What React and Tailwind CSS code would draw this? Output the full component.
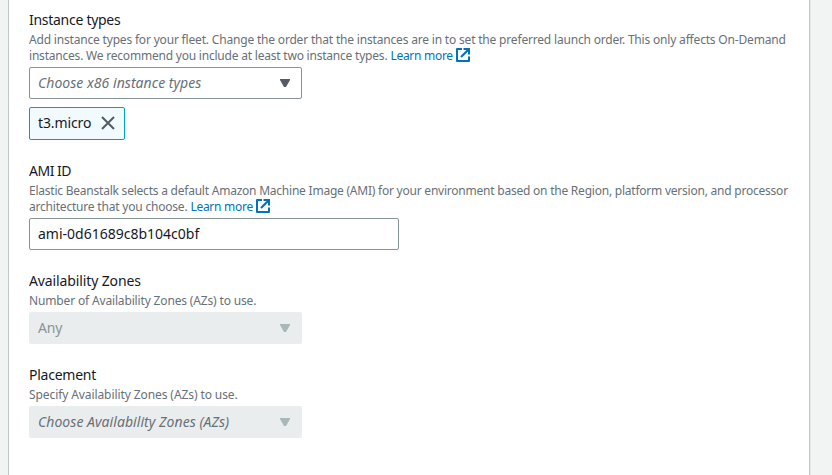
const ExternalIcon = () => (
  <svg className="mb-[2px] ml-[3px] h-[14px] w-[14px] shrink-0" viewBox="0 0 14 14" fill="none" stroke="#0073bb" strokeWidth="2">
    <path d="M6 1H1V13H13V8.5" strokeLinejoin="round" />
    <path d="M7.5 1H13V6.5M12.6 1.4L5 9" strokeWidth="2.1" />
  </svg>
);

const Caret = ({ className }) => (
  <svg className={`h-[8px] w-[10px] shrink-0 ${className}`} viewBox="0 0 10 8" fill="currentColor">
    <path d="M0 0H10V1L6 8H4L0 1Z" />
  </svg>
);

const Label = ({ children, className = "" }) => (
  <div className="h-[22px] text-[14px] leading-[22px] text-[#16191f]">
    <span className={className}>{children}</span>
  </div>
);

const Line = ({ children, className = "", link }) => (
  <div className="flex h-4 items-center whitespace-nowrap text-[12px] leading-4 text-[#687078]">
    <span className={className}>{children}</span>
    {link && (
      <a className="ml-[3px] flex h-4 items-center text-[#0073bb]">
        <span className="tracking-[-0.28px]">Learn more</span>
        <ExternalIcon />
      </a>
    )}
  </div>
);

export default function App() {
  return (
    <div className="flex h-[475px] w-[832px] overflow-hidden bg-[#f2f3f3] pl-2 font-['Noto_Sans',sans-serif]">
      <main className="w-[802px] border-x border-[#bfc7c7] bg-white pl-5 pt-[9px] shadow-[1px_0_0_0_#e4e8e8]">
        <section className="h-[151px]">
          <Label className="tracking-[-0.28px]">Instance types</Label>
          <div className="h-9 pt-px">
            <Line className="tracking-[-0.183px]">Add instance types for your fleet. Change the order that the instances are in to set the preferred launch order. This only affects On-Demand</Line>
            <Line className="tracking-[-0.21px]" link>instances. We recommend you include at least two instance types.</Line>
          </div>
          <div className="flex h-8 w-[273px] items-center justify-between rounded-[2px] border border-[#879596] pl-2 pr-[11px] text-[14px] italic text-[#687078]">
            <span className="pb-[2px] tracking-[0.04px]">Choose x86 instance types</span>
            <Caret className="text-[#545b64]" />
          </div>
          <div className="mt-2 flex h-[33px] w-24 items-center justify-between rounded-[2px] border border-[#00a1c9] bg-[#f1faff] pl-2 pr-[9px] text-[14px] text-[#16191f]">
            <span className="pb-[2px] tracking-[-0.12px]">t3.micro</span>
            <svg className="mb-px h-[14px] w-[14px]" viewBox="0 0 14 14" fill="none" stroke="#545b64" strokeWidth="2">
              <path d="M1 1L13 13M13 1L1 13" />
            </svg>
          </div>
        </section>
        <section className="h-[110px]">
          <Label className="tracking-[-0.5px]">AMI ID</Label>
          <div className="h-9 pt-px">
            <Line className="tracking-[-0.227px]">Elastic Beanstalk selects a default Amazon Machine Image (AMI) for your environment based on the Region, platform version, and processor</Line>
            <Line className="tracking-[-0.2px]" link>architecture that you choose.</Line>
          </div>
          <div className="flex h-8 w-[370px] items-center rounded-[2px] border border-[#879596] pl-2 text-[14px] text-[#16191f]">
            <span className="pb-[2px]">ami-0d61689c8b104c0bf</span>
          </div>
        </section>
        <section className="h-[94px]">
          <Label className="tracking-[-0.12px]">Availability Zones</Label>
          <div className="h-5 pt-px">
            <Line className="tracking-[-0.155px]">Number of Availability Zones (AZs) to use.</Line>
          </div>
          <div className="flex h-8 w-[273px] items-center justify-between rounded-[2px] bg-[#eaeded] pl-[9px] pr-3 text-[14px] text-[#879596]">
            <span className="pb-[2px] tracking-[-0.2px]">Any</span>
            <Caret className="text-[#aab7b8]" />
          </div>
        </section>
        <section>
          <Label className="tracking-[-0.24px]">Placement</Label>
          <div className="h-5 pt-px">
            <Line className="tracking-[-0.09px]">Specify Availability Zones (AZs) to use.</Line>
          </div>
          <div className="flex h-8 w-[273px] items-center justify-between rounded-[2px] bg-[#eaeded] pl-[9px] pr-3 text-[14px] italic text-[#687078]">
            <span className="pb-[2px] tracking-[0.05px]">Choose Availability Zones (AZs)</span>
            <Caret className="text-[#aab7b8]" />
          </div>
        </section>
      </main>
    </div>
  );
}
